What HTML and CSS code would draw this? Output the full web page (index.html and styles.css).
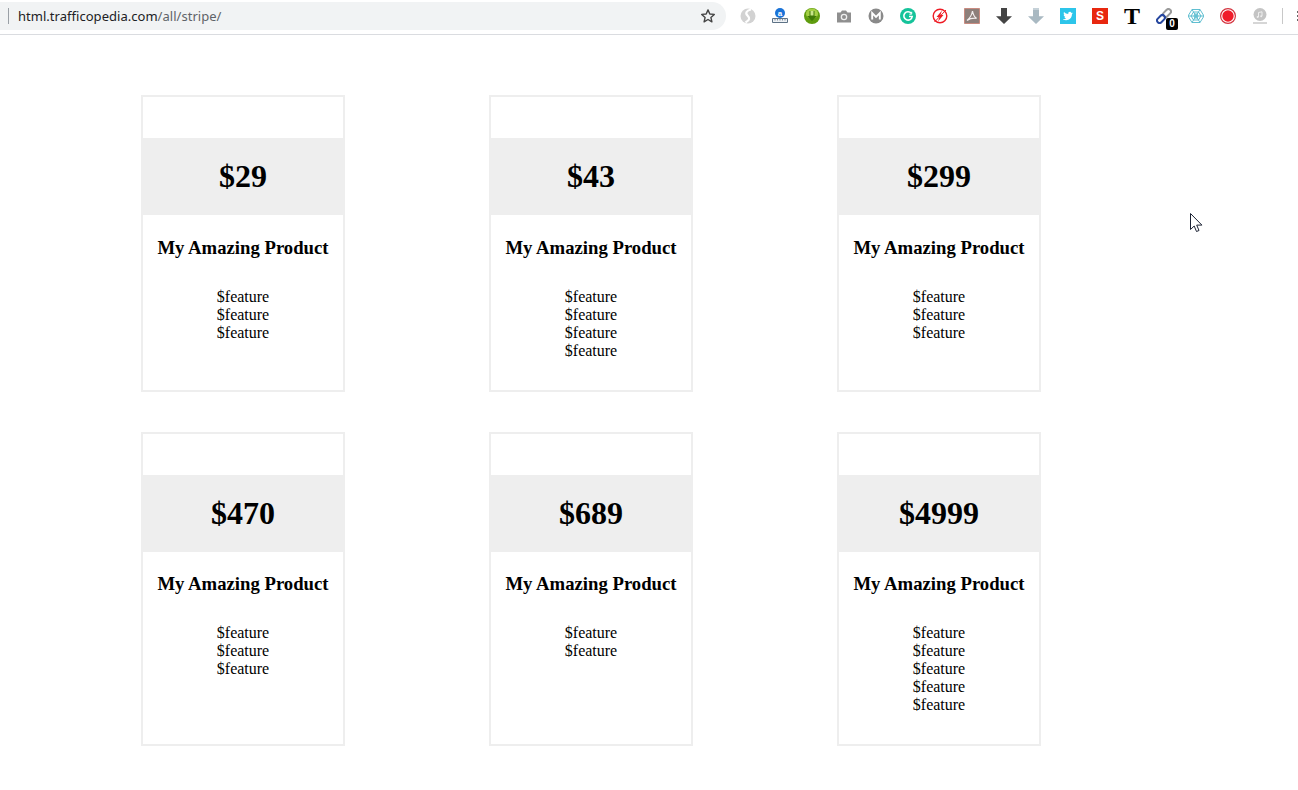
FILE: index.html
```html
<!DOCTYPE html>
<html lang="en">
<head>
<meta charset="utf-8">
<title>Stripe pricing</title>
<link rel="stylesheet" href="styles.css">
</head>
<body>
<header class="toolbar">
  <div class="omnibox">
    <span class="divider"></span>
    <span class="url">html.trafficopedia.com<span class="url-path">/all/stripe/</span></span>
    <svg class="star" viewBox="0 0 16 16"><path d="M8 1.900l1.800 4.100 4.500.4-3.400 3 1 4.400L8 11.500l-3.900 2.300 1-4.400-3.400-3 4.500-.4z" fill="none" stroke="#444" stroke-width="1.400" stroke-linejoin="round"/></svg>
  </div>
  <div class="extensions">
    <span class="ext"><svg viewBox="0 0 16 16"><circle cx="8" cy="8" r="7.500" fill="#d2d2d2"/><path d="M11 1.500C6.500 2.500 5 5 7.500 7.500s2.500 4.500-2 7" fill="none" stroke="#fff" stroke-width="2.200"/></svg></span>
    <span class="ext"><svg viewBox="0 0 16 16"><circle cx="8" cy="5" r="5" fill="#1a73d8"/><text class="ext-a" x="8" y="7.500">a</text><path d="M.5 10.500h15v4H.5z" fill="#eef1f4" stroke="#5d7286"/><path d="M3 11v1.500M5.500 11v1.500M8 11v1.500M10.500 11v1.500M13 11v1.500" stroke="#5d7286" stroke-width=".8"/></svg></span>
    <span class="ext"><svg viewBox="0 0 16 16"><circle cx="8" cy="8" r="8" fill="#5f9c0e"/><path d="M2 5.500a6 5 0 0 1 12 0c0 3-2 5-6 5s-6-2-6-5z" fill="#a4cf45"/><path d="M5.500 3h5v5h2.500L8 13 3 8h2.500z" fill="#3f7a06"/><path d="M6.500 3h3v4.500h-3z" fill="#c9e58a"/></svg></span>
    <span class="ext"><svg viewBox="0 0 16 16"><path d="M1 4.500h3.500L6 2.500h4l1.500 2H15v10H1z" fill="#8f8f8f"/><circle cx="8" cy="9" r="3.300" fill="#eee"/><circle cx="8" cy="9" r="2" fill="#8f8f8f"/></svg></span>
    <span class="ext"><svg viewBox="0 0 16 16"><circle cx="8" cy="8" r="7.500" fill="#8a8a8a"/><path d="M4.200 11.500V5L8 8.800 11.800 5v6.500" fill="none" stroke="#fff" stroke-width="1.900"/></svg></span>
    <span class="ext"><svg viewBox="0 0 16 16"><circle cx="8" cy="8" r="8" fill="#15c39a"/><path d="M11.300 5.300A4.200 4.200 0 1 0 12.200 8.500H9" fill="none" stroke="#fff" stroke-width="1.600"/><path d="M11.700 3.800v2.400H9.300" fill="none" stroke="#fff" stroke-width="1"/></svg></span>
    <span class="ext"><svg viewBox="0 0 16 16"><circle cx="8" cy="8" r="6.800" fill="#fff" stroke="#ee1c25" stroke-width="1.400"/><path d="M10 2.500L4.500 9h3L6 13.500 11.500 7h-3z" fill="#ee1c25"/><path d="M2.500 14L14 2" stroke="#ee1c25" stroke-width="1"/></svg></span>
    <span class="ext"><svg viewBox="0 0 16 16"><path d="M.5.500h15v15H.5z" fill="#8d7f7a" stroke="#c98b80"/><path d="M8.500 3C8 6 6 10 3 12.500c2.500-1.800 6-2.500 9.500-2.200C10.500 9 9 6 8.500 3z" fill="none" stroke="#f2eeee" stroke-width="1.200"/></svg></span>
    <span class="ext"><svg viewBox="0 0 16 16"><path d="M5 0h6v8.300h5L8 16 0 8.300h5z" fill="#444"/></svg></span>
    <span class="ext"><svg viewBox="0 0 16 16"><path d="M5 0h6v8.300h5L8 16 0 8.300h5z" fill="#a9b9c2"/><path d="M5 0h6v2H5z" fill="#c5d1d8"/></svg></span>
    <span class="ext"><svg viewBox="0 0 16 16"><path d="M0 0h16v16H0z" fill="#2dc5ea"/><path d="M3 11.500c4.500 2 9-.5 9-5.500l1-1.200-1.300.3-.8-.9c-1.200-.9-3 .1-2.600 1.800-1.700 0-3.200-.8-4.300-2-.6 1.200-.2 2.300.6 3l-.9-.2c0 1 .7 1.800 1.600 2.100H4.400c.3.800 1 1.300 1.900 1.400-1 .7-2.100 1-3.300.8z" fill="#fff"/></svg></span>
    <span class="ext"><span class="ext-s">S</span></span>
    <span class="ext"><span class="ext-t">T</span></span>
    <span class="ext"><svg viewBox="0 0 16 16" fill="none" stroke-width="2"><rect x="6.500" y="2.500" width="9" height="5" rx="2.500" transform="rotate(-45 11 5)" stroke="#9a9a9a"/><rect x=".5" y="8.500" width="9" height="5" rx="2.500" transform="rotate(-45 5 11)" stroke="#27479f"/></svg><span class="badge">0</span></span>
    <span class="ext"><svg viewBox="0 0 16 16" fill="none" stroke="#4fb8cc" stroke-width=".9"><path d="M4 1.500h8L16 8l-4 6.500H4L0 8z"/><path d="M5.500 4h5L13 8l-2.500 4h-5L3 8z"/><path d="M7 6h2l1 2-1 2H7L6 8z"/><path d="M4 1.500l8 13M12 1.500l-8 13M0 8h16"/></svg></span>
    <span class="ext"><svg viewBox="0 0 16 16"><circle cx="8" cy="8" r="7.400" fill="#fff" stroke="#d3343f" stroke-width="1.200"/><circle cx="8" cy="8" r="5.700" fill="#f01c2a"/></svg></span>
    <span class="ext"><svg viewBox="0 0 16 16"><circle cx="8" cy="6.500" r="6.500" fill="#c4c4c4"/><path d="M6.500 9V4.500L10 3.800v4.200" fill="none" stroke="#eee" stroke-width="1"/><circle cx="5.700" cy="9" r="1" fill="#eee"/><circle cx="9.200" cy="8.200" r="1" fill="#eee"/><path d="M1 15h14" stroke="#c4c4c4" stroke-width="1.400"/></svg></span>
  </div>
  <span class="tool-sep"></span>
  <span class="menu"><i></i><i></i><i></i></span>
</header>

<main class="pricing">
  <section class="card">
    <h1 class="price">$29</h1>
    <h2 class="name">My Amazing Product</h2>
    <ul class="features"><li>$feature</li><li>$feature</li><li>$feature</li></ul>
  </section>
  <section class="card">
    <h1 class="price">$43</h1>
    <h2 class="name">My Amazing Product</h2>
    <ul class="features"><li>$feature</li><li>$feature</li><li>$feature</li><li>$feature</li></ul>
  </section>
  <section class="card">
    <h1 class="price">$299</h1>
    <h2 class="name">My Amazing Product</h2>
    <ul class="features"><li>$feature</li><li>$feature</li><li>$feature</li></ul>
  </section>
  <section class="card">
    <h1 class="price">$470</h1>
    <h2 class="name">My Amazing Product</h2>
    <ul class="features"><li>$feature</li><li>$feature</li><li>$feature</li></ul>
  </section>
  <section class="card">
    <h1 class="price">$689</h1>
    <h2 class="name">My Amazing Product</h2>
    <ul class="features"><li>$feature</li><li>$feature</li></ul>
  </section>
  <section class="card">
    <h1 class="price">$4999</h1>
    <h2 class="name">My Amazing Product</h2>
    <ul class="features"><li>$feature</li><li>$feature</li><li>$feature</li><li>$feature</li><li>$feature</li></ul>
  </section>
</main>

<svg class="cursor" viewBox="0 0 13 20"><path d="M.5.500v16l3.700-3.500 2.300 5.500 2.500-1-2.300-5.400h5.200z" fill="#fff" stroke="#1c2233" stroke-width="1"/></svg>
</body>
</html>
```
FILE: styles.css
```css
html, body {
  margin: 0;
  padding: 0;
  background: #fff;
  overflow: hidden;
}

body {
  height: 790px;
  font-family: "Liberation Serif", "Times New Roman", serif;
  color: #000;
}

.toolbar {
  display: flex;
  align-items: flex-start;
  height: 34px;
  border-bottom: 1px solid #dadce0;
  overflow: hidden;
}

.omnibox {
  display: flex;
  align-items: center;
  flex: none;
  width: 726px;
  height: 28px;
  margin-top: 2px;
  padding-left: 8px;
  padding-right: 10px;
  box-sizing: border-box;
  background: #f1f3f4;
  border-radius: 0 14px 14px 0;
}

.divider {
  flex: none;
  width: 1px;
  height: 16px;
  margin-right: 9px;
  background: #9aa0a6;
}

.url {
  flex: 1;
  font-family: "Noto Sans", "Open Sans", sans-serif;
  font-size: 13px;
  letter-spacing: 0.03px;
  color: #202124;
  white-space: nowrap;
}

.url-path {
  color: #5f6368;
}

.star {
  flex: none;
  width: 16px;
  height: 16px;
}

.extensions {
  display: flex;
  flex: none;
  margin-left: 6px;
}

.ext {
  position: relative;
  display: flex;
  align-items: center;
  justify-content: center;
  flex: none;
  width: 32px;
  height: 32px;
}

.ext svg {
  width: 16px;
  height: 16px;
}

.ext-a {
  font: bold 8px "Liberation Sans", Arial, sans-serif;
  fill: #fff;
  text-anchor: middle;
}

.ext-s {
  display: block;
  width: 16px;
  height: 16px;
  background: #e8280f;
  color: #fff;
  font: bold 12px/16px "Liberation Sans", Arial, sans-serif;
  text-align: center;
}

.ext-t {
  font: bold 24px/24px "Liberation Serif", "Times New Roman", serif;
  color: #000;
}

.badge {
  position: absolute;
  left: 18px;
  top: 18px;
  width: 12px;
  height: 12px;
  border-radius: 2px;
  background: #000;
  color: #fff;
  font: bold 10px/12px "Liberation Sans", Arial, sans-serif;
  text-align: center;
}

.tool-sep {
  flex: none;
  width: 1px;
  height: 16px;
  margin-top: 8px;
  margin-left: 6px;
  background: #c8c8c8;
}

.menu {
  display: flex;
  flex-direction: column;
  gap: 2px;
  flex: none;
  margin-top: 11px;
  margin-left: 14px;
}

.menu i {
  display: block;
  width: 2px;
  height: 2px;
  background: #666;
}

.pricing {
  display: grid;
  grid-template-columns: repeat(3, 204px);
  column-gap: 144px;
  row-gap: 40px;
  padding: 60px 0 0 141px;
}

.card {
  box-sizing: border-box;
  border: 2px solid #eee;
  text-align: center;
}

.price {
  margin: 41.44px 0 21.44px;
  padding: 20px 0;
  background: #eee;
  font-size: 32px;
  line-height: 37px;
  font-weight: bold;
}

.name {
  margin: 0 0 30px;
  font-size: 18.72px;
  line-height: 21px;
  font-weight: bold;
}

.features {
  margin: 0 0 29.7px;
  padding: 0;
  list-style: none;
  font-size: 16px;
  line-height: 18px;
}

.cursor {
  position: absolute;
  left: 1190px;
  top: 213px;
  width: 13px;
  height: 20px;
}
```
